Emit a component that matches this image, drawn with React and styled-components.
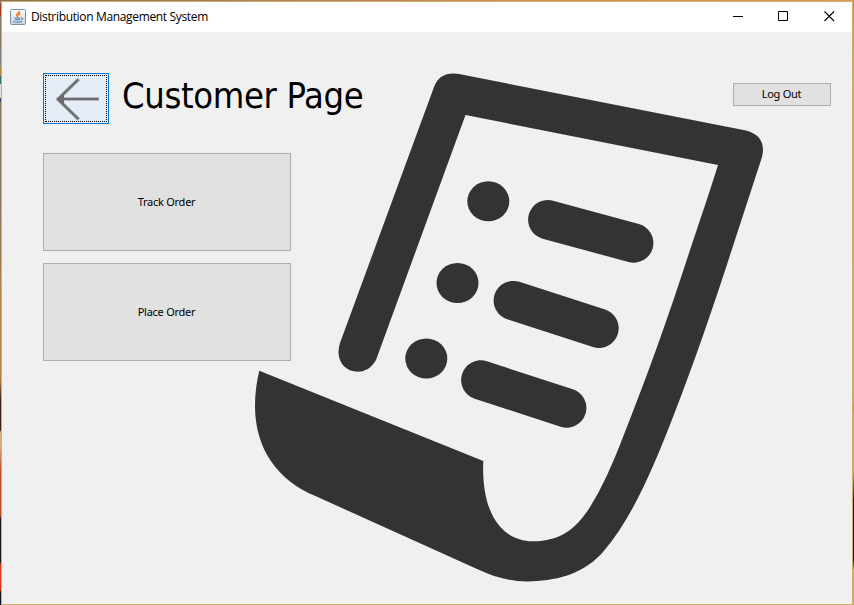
import React from "react";
import styled, { createGlobalStyle } from "styled-components";

const GlobalStyle = createGlobalStyle`
  * { box-sizing: border-box; }
  html, body { margin: 0; padding: 0; overflow: hidden; }
  button { margin: 0; padding: 0; font: inherit; color: inherit; cursor: default; }
`;

const Desktop = styled.div`
  width: 854px;
  height: 605px;
  padding: 1px 1px 0 1px;
  background:
    linear-gradient(#8a7258 0 4px, #a03a18 4px 16px, #8a7a62 16px 50px, #7a8a80 50px 66px, #b08a40 66px 76px, #2f7060 76px 84px, #ddd 84px 98px, #3c4870 98px 102px, #8a7a60 102px 200px, #b58448 300px 380px, #3a1c12 400px 430px, #d8b078 432px 445px, #c84a2c 470px 515px, #1a1618 520px 562px, #d83c1c 564px 590px, #15151a 592px) left / 1px 100% no-repeat,
    linear-gradient(#c88a50 0, #c8b060 100px, #c8a860 400px, #d08a40 408px, #c8b068 418px 470px, #2a1408 500px 560px, #c8b458 570px) right / 1px 100% no-repeat,
    linear-gradient(90deg, #8a7258, #c98e5e 60%, #e0985c) top / 100% 1px no-repeat;
`;

const Window = styled.div`
  display: flex;
  flex-direction: column;
  height: 604px;
  border: 1px solid #d0ae68;
  background: #f0f0f0;
  color: #000;
`;

const TitleBar = styled.header`
  display: flex;
  align-items: center;
  height: 30px;
  flex: none;
  padding-left: 8px;
  background: #fff;
`;

const Title = styled.span`
  flex: 1;
  margin-left: 5px;
  font: 12px/16px "Open Sans", sans-serif;
  letter-spacing: -0.34px;
`;

const Caption = styled.button`
  display: flex;
  align-items: center;
  justify-content: center;
  width: 45.5px;
  height: 30px;
  padding-bottom: ${(p) => p.$lift || 0}px;
  border: 0;
  background: transparent;
`;

const Page = styled.main`
  display: grid;
  grid-template-columns: 248px 1fr;
  flex: 1;
  position: relative;
  padding: 41px 21px 0 41px;
  align-content: start;
`;

const Backdrop = styled.svg`
  position: absolute;
  left: 248px;
  top: 34px;
  width: 520px;
  height: 520px;
`;

const Heading = styled.div`
  grid-column: 1 / -1;
  display: flex;
  align-items: flex-start;
  height: 80px;
  position: relative;
`;

const BackButton = styled.button`
  width: 66px;
  height: 51px;
  padding: 1px;
  border: 1px solid #0078d7;
  background: #e5edf7;
`;

const Focus = styled.span`
  display: block;
  width: 62px;
  height: 47px;
  border: 1px dotted #000;
`;

const PageTitle = styled.h1`
  flex: 1;
  margin: 1px 0 0 13px;
  font: 400 36px/44px "DejaVu Sans Condensed", "DejaVu Sans", sans-serif;
  font-stretch: condensed;
  letter-spacing: -0.35px;
  white-space: nowrap;
`;

const PushButton = styled.button`
  width: ${(p) => p.$width}px;
  height: ${(p) => p.$height}px;
  margin-top: ${(p) => p.$top || 0}px;
  padding-right: 1px;
  padding-bottom: ${(p) => p.$lift || 0}px;
  border: 1px solid #adadad;
  background: #e1e1e1;
  font: 11px/14px "Noto Sans", sans-serif;
  letter-spacing: -0.25px;
`;

const Menu = styled.nav`
  display: flex;
  flex-direction: column;
  gap: 12px;
  position: relative;
`;

function JavaIcon() {
  return (
    <svg width="16" height="16" viewBox="0 0 16 16" fill="none">
      <defs>
        <linearGradient id="tile" x1="0" y1="0" x2="0" y2="1">
          <stop offset="0" stopColor="#fafcfd" />
          <stop offset="1" stopColor="#c3d2df" />
        </linearGradient>
      </defs>
      <rect x=".5" y=".5" width="15" height="15" rx="1" fill="url(#tile)" stroke="#7890a5" />
      <path d="M9.4 2C9.5 4 6.3 4.5 6.7 6.2C6.9 7 7.7 7.4 7.5 8.3M10.4 4.4C8.8 5 8.3 5.9 9 6.8" stroke="#ed761c" strokeWidth="1.4" />
      <path d="M4.5 9h6M5 10.7h5M11 9c2.5-.5 2 1.6 0 2M3 12.3c1 1.2 7.3 1.2 9 0" stroke="#52799b" />
    </svg>
  );
}

function BackArrow() {
  return (
    <svg width="60" height="45" viewBox="46 76 60 45" fill="none">
      <g stroke="#a4a7ab" strokeWidth="3.6">
        <path d="M78.8 79L58 99.3L78.8 119.5" />
        <path d="M60 99H99" />
      </g>
      <g stroke="#6c6c6c" strokeWidth="2">
        <path d="M78.3 79.5L58 99.3L78.3 119" />
        <path d="M60 99H98.5" />
      </g>
      <path d="M56.5 99.3L64 92.5V106Z" fill="#6c6c6c" />
    </svg>
  );
}

function OrderScroll() {
  return (
    <Backdrop viewBox="250 66 520 520" fill="#333" aria-hidden="true">
      <path d="M340 343L434 87Q440 71 459 74L746 130.5Q763 135 763 150Q763 153 762 157L731.7 250C711 314 690 374 673 417C655 463 634 516 603 552C587 570 566 579 537 581C515 583 496 578 477 569L316 496.3C278 481 255 449 255 406Q255 388 259.3 370.7L483.3 461C481 512 501 541.3 533 541.3C560 541.3 576 529 590 507C602 488 613 463 623 437C648 374 669 315 690 250C700 220 709 194 718 165L465.5 115L376 360C371 369 364 371.7 358 371.7C346 371.7 338.5 363 338.5 352Q338.5 347 340 343Z" />
      <ellipse cx="488.3" cy="201.3" rx="21" ry="20" />
      <ellipse cx="457.5" cy="283" rx="21" ry="20" />
      <ellipse cx="426.3" cy="358.5" rx="21" ry="20" />
      <g stroke="#333" strokeWidth="39.4" strokeLinecap="round">
        <path d="M547.8 219.7L633.7 243" />
        <path d="M513.3 300.6L599 328.3" />
        <path d="M480.8 380L566.7 408" />
      </g>
    </Backdrop>
  );
}

export default function App() {
  return (
    <>
      <GlobalStyle />
      <Desktop>
        <Window>
          <TitleBar>
            <JavaIcon />
            <Title>Distribution Management System</Title>
            <Caption aria-label="Minimize" $lift={1}>
              <svg width="11" height="11"><path d="M0 5.5h10" stroke="#000" shapeRendering="crispEdges" /></svg>
            </Caption>
            <Caption aria-label="Maximize" $lift={1}>
              <svg width="11" height="11"><path d="M.5 .5h9v9h-9z" stroke="#000" fill="none" /></svg>
            </Caption>
            <Caption aria-label="Close" $lift={2}>
              <svg width="11" height="11"><path d="M.5 .5l9.5 9.5M10 .5l-9.5 9.5" stroke="#000" strokeWidth="1.1" /></svg>
            </Caption>
          </TitleBar>
          <Page>
            <OrderScroll />
            <Heading>
              <BackButton aria-label="Back"><Focus><BackArrow /></Focus></BackButton>
              <PageTitle>Customer Page</PageTitle>
              <PushButton $width={98} $height={23} $top={10} $lift={2}>Log Out</PushButton>
            </Heading>
            <Menu>
              <PushButton $width={248} $height={98}>Track Order</PushButton>
              <PushButton $width={248} $height={98}>Place Order</PushButton>
            </Menu>
          </Page>
        </Window>
      </Desktop>
    </>
  );
}
